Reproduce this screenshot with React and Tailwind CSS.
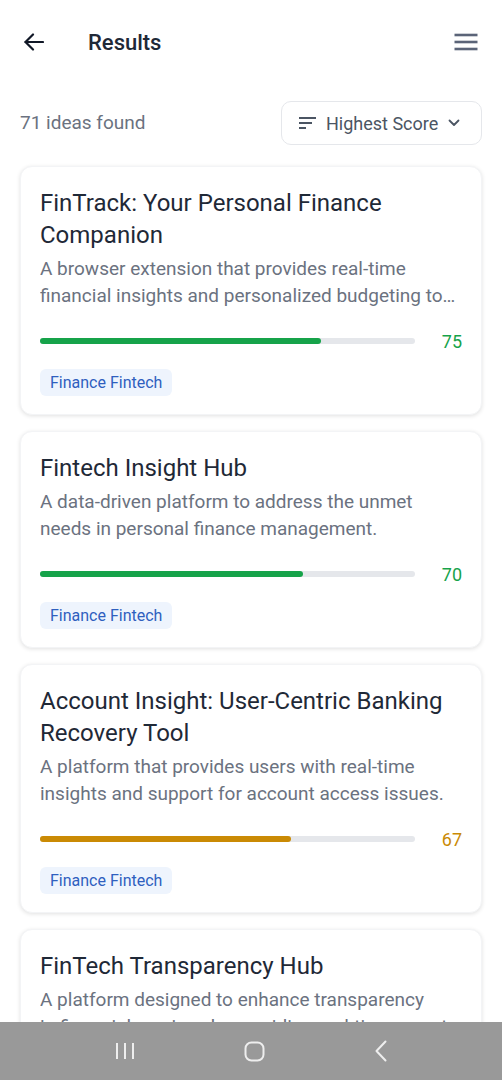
import React from 'react'

const ideas = [
  {
    title: 'FinTrack: Your Personal Finance Companion',
    desc: 'A browser extension that provides real-time financial insights and personalized budgeting to help everyday users save more.',
    score: 75,
  },
  {
    title: 'Fintech Insight Hub',
    desc: 'A data-driven platform to address the unmet needs in personal finance management.',
    score: 70,
  },
  {
    title: 'Account Insight: User-Centric Banking Recovery Tool',
    desc: 'A platform that provides users with real-time insights and support for account access issues.',
    score: 67,
  },
  {
    title: 'FinTech Transparency Hub',
    desc: 'A platform designed to enhance transparency in\u00a0financial services by providing real-time reports for users.',
    score: 64,
  },
]

function IdeaCard({ title, desc, score }) {
  const high = score >= 70
  return (
    <div className="rounded-xl border border-gray-100 bg-white px-[19px] pb-[18px] pt-[20px] shadow-[0_1px_4px_rgba(0,0,0,0.12)]">
      <h2 className="text-[24px] leading-[32px] text-[#1f2937]">{title}</h2>
      <p className="mt-[4px] line-clamp-2 text-[19px] leading-[27px] text-[#6b7280]">{desc}</p>
      <div className="mt-[18px] flex h-[28px] items-center">
        <div className="h-[6px] flex-1 rounded-full bg-[#e5e7eb]">
          <div
            className={high ? 'h-full rounded-full bg-[#16a34a]' : 'h-full rounded-full bg-[#ca8a04]'}
            style={{ width: `${score}%` }}
          />
        </div>
        <span
          className={
            high
              ? 'w-[47px] text-right text-[18px] text-[#16a34a]'
              : 'w-[47px] text-right text-[18px] text-[#ca8a04]'
          }
        >
          {score}
        </span>
      </div>
      <div className="mt-[14px] flex">
        <span className="rounded-md bg-[#eef4fd] px-[10px] py-[3px] text-[16px] leading-[21px] text-[#2f5fbf]">
          Finance Fintech
        </span>
      </div>
    </div>
  )
}

export default function App() {
  return (
    <div className="relative min-h-[1080px] bg-white font-['Roboto',sans-serif]">
      <header className="flex h-[84px] items-center px-[24px]">
        <svg width="20" height="18" viewBox="0 0 20 18" fill="none" stroke="#111827" strokeWidth="2.2" strokeLinecap="round" strokeLinejoin="round">
          <path d="M19 9H1.5" />
          <path d="M9 1.5 1.5 9 9 16.5" />
        </svg>
        <h1 className="ml-[44px] text-[22px] font-medium text-[#1f2937]">Results</h1>
        <svg className="ml-auto" width="24" height="18" viewBox="0 0 24 18" fill="none" stroke="#5b6478" strokeWidth="2.6">
          <path d="M0.5 2H23.5" />
          <path d="M0.5 9H23.5" />
          <path d="M0.5 16H23.5" />
        </svg>
      </header>

      <div className="mt-[17px] flex items-center justify-between px-[20px]">
        <span className="text-[19px] text-[#6b7280]">71 ideas found</span>
        <button
          type="button"
          className="flex h-[44px] w-[201px] items-center rounded-[10px] border border-gray-200 pl-[17px] pr-[21px]"
        >
          <svg width="17" height="14" viewBox="0 0 17 14" fill="none" stroke="#4b5563" strokeWidth="2">
            <path d="M0 2H17" />
            <path d="M0 7H13" />
            <path d="M0 12H7" />
          </svg>
          <span className="ml-[10px] text-[18px] text-[#4b5563]">Highest Score</span>
          <svg className="ml-auto" width="12" height="8" viewBox="0 0 12 8" fill="none" stroke="#4b5563" strokeWidth="1.8" strokeLinecap="round" strokeLinejoin="round">
            <path d="M1.5 1.5 6 6 10.5 1.5" />
          </svg>
        </button>
      </div>

      <div className="mt-[21px] flex flex-col gap-[16px] px-[20px] pb-[80px]">
        {ideas.map((idea) => (
          <IdeaCard key={idea.title} {...idea} />
        ))}
      </div>

      <nav className="fixed inset-x-0 bottom-0 flex h-[58px] items-center justify-around bg-[#999999] px-[60px]">
        <svg width="20" height="18" viewBox="0 0 20 18" fill="none" stroke="#eeeeee" strokeWidth="2">
          <path d="M2 1V17" />
          <path d="M10 1V17" />
          <path d="M18 1V17" />
        </svg>
        <svg width="21" height="21" viewBox="0 0 21 21" fill="none" stroke="#eeeeee" strokeWidth="2">
          <rect x="1.5" y="1.5" width="18" height="18" rx="6" />
        </svg>
        <svg width="14" height="22" viewBox="0 0 14 22" fill="none" stroke="#eeeeee" strokeWidth="2" strokeLinecap="round" strokeLinejoin="round">
          <path d="M11.5 1.5 2.5 11 11.5 20.5" />
        </svg>
      </nav>
    </div>
  )
}
